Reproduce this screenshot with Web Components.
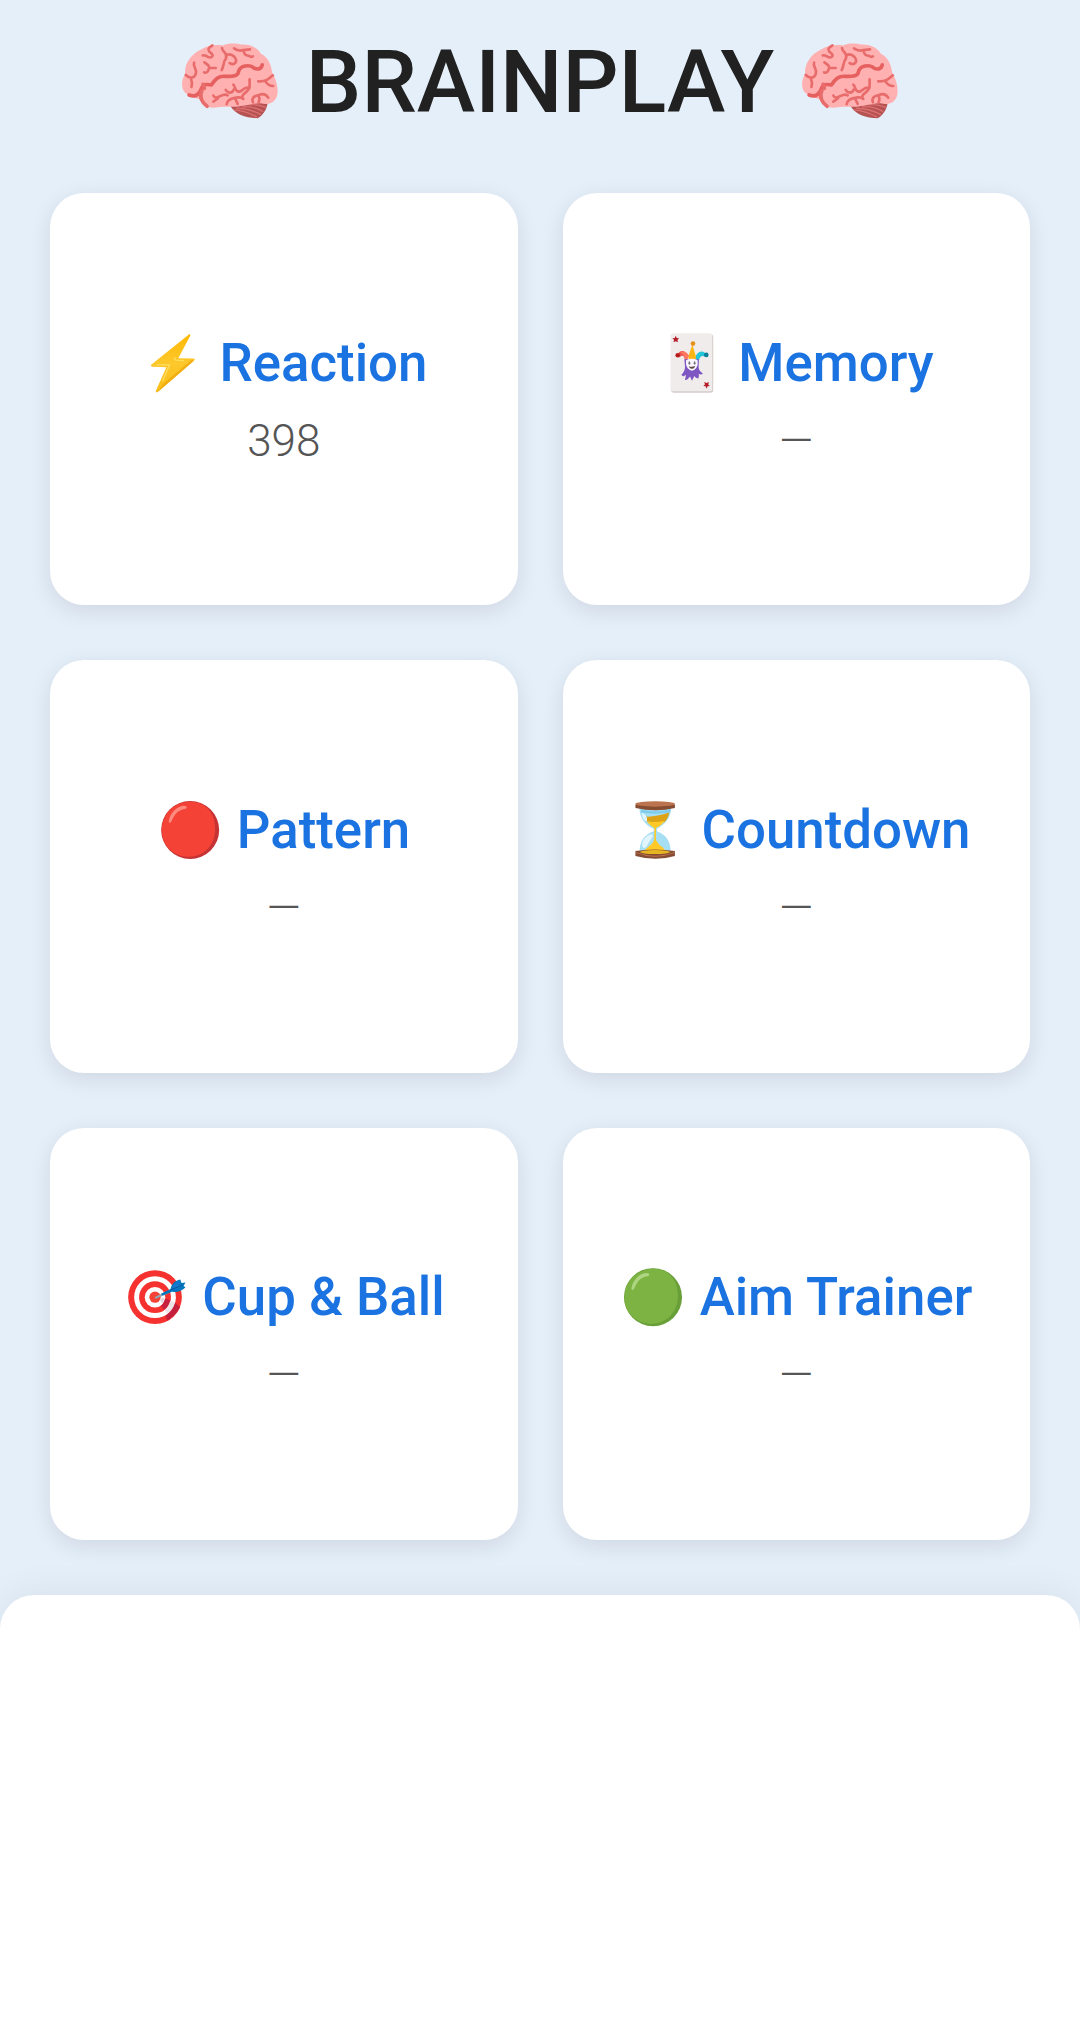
<!DOCTYPE html>
<html lang="en">
<head>
<meta charset="UTF-8">
<title>BrainPlay</title>
<style>
  body {
    margin: 0;
    background: #e5effa;
    font-family: Roboto, sans-serif;
  }
</style>
</head>
<body>
<brain-app></brain-app>

<script>
const icons = {
  brain: ['-0.5 -15 325 306', `
    <path fill="#b55252" d="M162 212C178 239 210 250 245 250C259 244 272 226 275 206L236 200Z"/>
    <path fill="none" stroke="#dd7070" stroke-width="4" d="M181 220Q215 219 255 239M198 216Q229 212 262 230M218 210Q243 207 270 217M173 225Q204 226 243 246"/>
    <path fill="#ffb1b1" d="M18 150C17 136 22 125 27 116C24 86 45 57 75 43C93 31 120 28 142 31C155 23 180 24 195 28C225 26 246 40 255 56C281 69 286 94 289 113C298 128 307 150 305 174C303 200 280 213 254 205C240 204 216 211 195 213C165 219 143 212 120 218C94 222 79 210 74 194C59 189 43 188 35 179C21 170 18 161 18 150Z"/>
    <g fill="none" stroke="#e96c6c" stroke-width="8" stroke-linecap="round" stroke-linejoin="round">
      <path d="M109 31C93 39 95 47 105 54C114 62 108 70 96 66Q87 59 80 61"/>
      <path d="M54 83C49 94 64 100 59 117C54 130 41 132 29 120M45 133Q50 145 46 156"/>
      <path d="M85 82C97 91 103 93 97 105Q92 116 84 112M101 99L119 99"/>
      <path d="M138 39C140 54 156 51 150 70C140 82 145 91 137 105M153 59Q165 55 175 65C187 79 176 93 161 84"/>
      <path d="M174 40Q188 50 202 45L222 43M203 47Q204 61 218 62Q225 67 231 64"/>
      <path stroke-width="11" stroke="#e66060" d="M39 180Q63 190 74 165C82 144 91 148 106 150C117 134 127 121 149 124C171 124 187 124 188 108C194 91 220 89 230 96C242 106 257 103 259 89"/>
      <path stroke-width="11" d="M77 168C69 186 78 204 93 214M81 148L85 160"/>
      <path d="M172 149C180 157 176 172 191 170C202 166 204 155 221 158M221 133L221 154C219 174 196 174 199 188M173 164C168 178 154 174 149 165"/>
      <path d="M112 182Q116 193 134 183Q147 176 155 181M126 190L112 200M152 208C153 193 168 190 180 188Q195 185 202 192M177 190L185 207M231 202C226 189 236 182 249 180Q267 173 277 188M248 182Q253 193 248 202"/>
      <path d="M291 121C280 131 269 141 247 139M269 140Q277 153 292 153"/>
    </g>`],
  bolt: ['-1 33 198 187', `
    <defs><linearGradient id="bolt" x1="0" y1="0" x2="0" y2="1">
      <stop stop-color="#feb804"/><stop offset=".5" stop-color="#fdc82c"/><stop offset="1" stop-color="#f9bd18"/>
    </linearGradient></defs>
    <path fill="url(#bolt)" d="M145 41Q151 36 150 44L114 112L159 113Q167 114 162 119L53 213Q44 219 47 209L78 139L36 138Q28 135 33 131Z"/>
    <path fill="#eba50a" opacity=".7" d="M53 213L162 119L152 118L70 188Z"/>
    <path fill="none" stroke="#ffe36b" stroke-width="4" stroke-linecap="round" stroke-linejoin="round" opacity=".8" d="M102 111L106 118L130 119M50 132L88 132L67 180"/>`],
  joker: ['-1 34 198 187', `
    <rect x="35" y="41" width="127" height="176" rx="8" fill="#d5ccca"/>
    <rect x="33" y="38" width="126" height="175" rx="8" fill="#f0eceb"/>
    <path id="star" fill="#b71c2b" d="M49 45L52 52L59 53L54 58L56 65L49 62L42 65L44 58L39 53L46 52Z"/>
    <use href="#star" transform="rotate(180 95.5 125)"/>
    <path fill="#ef5350" d="M56 101C61 86 78 88 89 106L83 119L76 118C77 109 68 100 61 111Z"/>
    <path fill="#ff7961" d="M63 95Q76 88 89 106L84 118L77 117Q77 103 63 95Z"/>
    <path fill="#26c6da" d="M109 106C119 88 136 89 141 103L134 108C126 103 121 112 119 119L109 118Z"/>
    <path fill="#fbb615" d="M99 72L88 105L88 116L110 116L109 105Z"/>
    <circle cx="101" cy="69" r="7" fill="#e69019"/>
    <circle cx="55" cy="104" r="7" fill="#b71c1c"/>
    <circle cx="141" cy="103" r="7" fill="#087f9b"/>
    <path fill="#7e57c2" d="M75 116L119 116L118 138C118 151 126 154 131 160Q124 165 118 160Q121 169 117 174Q108 174 105 167L98 181L92 168Q82 181 77 178L80 163Q71 172 66 163C72 158 77 149 77 139Z"/>
    <path fill="#f9f5ff" d="M80 119Q98 111 115 119L115 132Q112 147 98 151Q83 147 80 131Z"/>
    <path stroke="#424242" stroke-width="2" d="M90 122V133M86 128H94M106 122V133M102 128H110"/>
    <path fill="#5b4740" d="M88 137Q98 141 108 136Q105 146 98 145Q91 145 88 137Z"/>`],
  red: ['20 27 198 187', `
    <circle cx="119.500" cy="120.500" r="87.500" fill="#c63334"/>
    <path fill="#f44336" d="M119 35C166 33 196 72 195 116C195 169 157 203 113 201C68 200 34 166 34 121C34 73 70 36 119 35Z"/>
    <path fill="#ff8b80" d="M55 94C58 70 79 48 101 47C111 48 112 55 103 57C84 60 75 70 65 90C61 100 55 101 55 94Z"/>`],
  hourglass: ['5 27 198 187', `
    <path fill="#a6def4" d="M57 55L153 55C151 81 139 101 110 117V124C137 134 153 156 151 188H58C56 157 72 133 100 124V117C72 105 58 83 57 55Z"/>
    <path fill="#71c5e9" d="M62 59Q104 70 151 58L150 68Q103 75 62 68Z" opacity=".7"/>
    <path fill="#dba315" d="M76 80Q104 82 147 68Q144 87 133 96Q104 99 79 95Z"/>
    <path fill="#ffca28" d="M79 95Q106 98 133 93Q124 107 107 114V151C120 175 130 168 137 188H70C81 166 96 171 102 147V115Q89 107 79 95Z"/>
    <path fill="#e1f5fe" d="M64 69Q77 71 80 86Q81 99 72 91Q64 83 64 69M65 166C66 150 76 139 90 134Q101 132 96 142C90 151 85 157 79 170Q67 181 65 166Z"/>
    <path fill="#864d33" d="M45 43H164V54Q106 68 45 54ZM45 184Q103 174 164 184V199Q107 216 45 199Z"/>
    <ellipse cx="104.500" cy="42" rx="59.500" ry="8" fill="#bc7450"/>
    <path fill="#bd7250" d="M47 187Q104 210 162 187V190Q104 212 47 190Z"/>
    <ellipse cx="104" cy="187" rx="45" ry="6" fill="#e8b522"/>`],
  target: ['12 47 198 187', `
    <circle cx="108" cy="141" r="81" fill="#f5322f"/>
    <circle cx="108" cy="141" r="63" fill="#fff"/>
    <circle cx="108" cy="141" r="48" fill="#f5322f"/>
    <circle cx="108" cy="141" r="31" fill="#fff"/>
    <circle cx="108" cy="141" r="17" fill="#f44336"/>
    <path fill="#e0d5da" d="M123 149L131 141L139 146L129 160Z"/>
    <path fill="#c8203f" d="M139 146L155 150Q150 168 136 180L126 167Q135 159 139 146Z"/>
    <path fill="#eee3e7" d="M154 152L169 157Q163 180 146 191L137 180Q149 170 154 152Z"/>
    <path fill="#c51f3e" d="M169 158L184 171Q173 194 145 212L140 197Q160 184 169 158Z"/>
    <path stroke="#8fa5b0" stroke-width="7" stroke-linecap="round" d="M111 142L148 126"/>
    <path fill="#0277bd" d="M126 131L155 116C159 99 169 92 184 88L188 98L200 97L194 107L200 111Q185 128 159 125L131 136Z"/>
    <path fill="#1279cf" d="M155 117Q167 95 186 91L181 104L194 104Q181 117 160 119Z"/>
    <path fill="none" stroke="#01579b" stroke-width="3" d="M155 119L191 105"/>`],
  green: ['30 47 198 187', `
    <circle cx="129" cy="141" r="87.500" fill="#689f38"/>
    <path fill="#7cb342" d="M129 55C176 54 205 91 204 137C204 188 168 222 122 222C77 220 43 187 43 142C43 94 79 57 129 55Z"/>
    <path fill="#aed581" d="M64 115C67 91 88 68 110 68C120 69 121 76 112 78C93 81 84 91 74 111C70 121 64 122 64 115Z"/>`]
};

class GameIcon extends HTMLElement {
  constructor() {
    super();
    this._shadowRoot = this.attachShadow({ mode: 'open' });
  }
  connectedCallback() {
    const [box, shapes] = icons[this.getAttribute('name')];
    this._shadowRoot.innerHTML = `
    <style>
      :host {
        display: inline-block;
        width: var(--icon-width, 66px);
        height: var(--icon-height, 62px);
      }
      svg {
        display: block;
        width: 100%;
        height: 100%;
      }
    </style>
    <svg viewBox="${box}" aria-hidden="true">${shapes}</svg>
    `;
  }
}

class AppHeader extends HTMLElement {
  constructor() {
    super();
    this._shadowRoot = this.attachShadow({ mode: 'open' });
  }
  connectedCallback() {
    this._shadowRoot.innerHTML = `
    <style>
      :host {
        display: block;
        padding-top: 30px;
        --icon-width: 108px;
        --icon-height: 102px;
      }
      h1 {
        display: flex;
        align-items: center;
        justify-content: center;
        gap: 22px;
        height: 102px;
        margin: 0;
        font-size: 88px;
        font-weight: 500;
        line-height: 102px;
        color: #212121;
      }
      span {
        padding-top: 2px;
      }
    </style>
    <h1>
      <game-icon name="brain"></game-icon>
      <span><slot></slot></span>
      <game-icon name="brain"></game-icon>
    </h1>
    `;
  }
}

class GameCard extends HTMLElement {
  constructor() {
    super();
    this._shadowRoot = this.attachShadow({ mode: 'open' });
  }
  connectedCallback() {
    this._shadowRoot.innerHTML = `
    <style>
      :host {
        display: flex;
        flex-direction: column;
        align-items: center;
        justify-content: center;
        gap: 21px;
        border-radius: 34px;
        background: white;
        box-shadow: 0 6px 22px rgba(0, 0, 0, 0.1);
      }
      .title {
        display: flex;
        align-items: center;
        gap: 13.5px;
        font-size: 52.8px;
        font-weight: 500;
        line-height: 62px;
        white-space: nowrap;
        color: #1a73e0;
      }
      .score {
        font-size: 44px;
        font-weight: 300;
        line-height: 52px;
        color: #555;
      }
    </style>
    <div class="title">
      <game-icon name="${this.getAttribute('icon')}"></game-icon>
      <span><slot></slot></span>
    </div>
    <div class="score">${this.getAttribute('score') || '—'}</div>
    `;
  }
}

class BrainApp extends HTMLElement {
  constructor() {
    super();
    this._shadowRoot = this.attachShadow({ mode: 'open' });
  }
  connectedCallback() {
    this._shadowRoot.innerHTML = `
    <style>
      :host {
        display: flex;
        flex-direction: column;
        height: 2033px;
        overflow: hidden;
      }
      main {
        display: grid;
        grid-template-columns: 1fr 1fr;
        grid-auto-rows: 412.4px;
        gap: 55px 45px;
        padding: 61px 50px 55px;
      }
      footer {
        flex: 1;
        border-radius: 34px 34px 0 0;
        background: white;
        box-shadow: 0 -6px 34px rgba(0, 0, 0, 0.05);
      }
    </style>
    <app-header>BRAINPLAY</app-header>
    <main>
      <game-card icon="bolt" score="398">Reaction</game-card>
      <game-card icon="joker">Memory</game-card>
      <game-card icon="red">Pattern</game-card>
      <game-card icon="hourglass">Countdown</game-card>
      <game-card icon="target">Cup &amp; Ball</game-card>
      <game-card icon="green">Aim Trainer</game-card>
    </main>
    <footer></footer>
    `;
  }
}

customElements.define('game-icon', GameIcon);
customElements.define('app-header', AppHeader);
customElements.define('game-card', GameCard);
customElements.define('brain-app', BrainApp);
</script>
</body>
</html>
